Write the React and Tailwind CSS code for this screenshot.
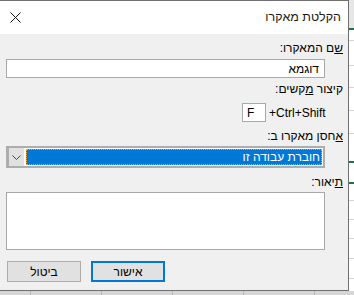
import React from 'react';

const font = { fontFamily: '"Liberation Sans", Arial, sans-serif' };

const Label = ({ children, className = '' }) => (
    <div className={`pr-[5px] text-[12px] leading-[14px] text-black ${className}`}>{children}</div>
);

const RightStrip = () => {
    const rows = [
        { h: 'h-[28px]', c: 'bg-[#e6e6e6]' },
        { h: 'h-[2px]', c: 'bg-[#217346]' },
        { h: 'h-[10px]', c: 'bg-white' },
        { h: 'h-[1px]', c: 'bg-[#d4d4d4]' },
        { h: 'h-[24px]', c: 'bg-white' },
        { h: 'h-[1px]', c: 'bg-[#d4d4d4]' },
        { h: 'h-[21px]', c: 'bg-white' },
        { h: 'h-[1px]', c: 'bg-[#d4d4d4]' },
        { h: 'h-[22px]', c: 'bg-white' },
        { h: 'h-[1px]', c: 'bg-[#d4d4d4]' },
        { h: 'h-[22px]', c: 'bg-white' },
        { h: 'h-[1px]', c: 'bg-[#d4d4d4]' },
        { h: 'h-[27px]', c: 'bg-white' },
        { h: 'h-[2px]', c: 'bg-[#217346]' },
        { h: 'h-[19px]', c: 'bg-white' },
        { h: 'h-[2px]', c: 'bg-[#217346]' },
        { h: 'h-[16px]', c: 'bg-white' },
        { h: 'h-[1px]', c: 'bg-[#d4d4d4]' },
        { h: 'h-[18px]', c: 'bg-white' },
        { h: 'h-[1px]', c: 'bg-[#d4d4d4]' },
        { h: 'h-[18px]', c: 'bg-white' },
        { h: 'h-[1px]', c: 'bg-[#d4d4d4]' },
        { h: 'h-[19px]', c: 'bg-white' },
        { h: 'h-[1px]', c: 'bg-[#d4d4d4]' },
        { h: 'h-[19px]', c: 'bg-white' },
        { h: 'h-[1px]', c: 'bg-[#d4d4d4]' },
        { h: 'flex-1', c: 'bg-white' },
    ];
    return (
        <div className="w-[5px] flex flex-col">
            {rows.map((r, i) => (
                <div key={i} className={`${r.h} ${r.c} shrink-0`} />
            ))}
        </div>
    );
};

const BottomStrip = () => {
    const widths = ['w-[31px]', 'w-[71px]', 'w-[71px]', 'w-[71px]', 'w-[71px]'];
    return (
        <div className="h-[4px] flex bg-[#d6d6d6]">
            {widths.map((w, i) => (
                <div key={i} className={`${w} shrink-0 border-r border-[#b4b4b4]`} />
            ))}
        </div>
    );
};

export default function App() {
    return (
        <div className="w-[354px] h-[295px] overflow-hidden flex flex-col bg-white" style={font}>
            <div className="flex h-[291px]">
                {/* Dialog */}
                <div dir="rtl" className="w-[349px] h-[291px] flex flex-col border-t border-r border-b border-[#6f6f6f] bg-[#f0f0f0]">
                    {/* Title bar */}
                    <div className="h-[33px] bg-white flex items-center justify-between pr-[7px] pl-[10px] shrink-0">
                        <span className="text-[12.5px] text-[#1a1a1a]">הקלטת מאקרו</span>
                        <svg width="11" height="11" viewBox="0 0 11 11">
                            <path d="M0.5 0.5 L10.5 10.5 M10.5 0.5 L0.5 10.5" stroke="#111" strokeWidth="1" />
                        </svg>
                    </div>

                    <Label className="mt-[7px]"><u>ש</u>ם המאקרו:</Label>
                    <div className="mt-[4px] mr-[23px] ml-[6px] h-[19px] bg-white border border-[#a9a9a9] flex items-center pr-[5px] text-[12px]">
                        דוגמא
                    </div>

                    <Label className="mt-[4px]">קיצור <u>מ</u>קשים:</Label>
                    <div dir="ltr" className="mt-[7px] flex items-center pl-[242px] h-[19px]">
                        <div className="w-[24px] h-[19px] bg-white border border-[#a9a9a9] flex items-center pl-[4px] text-[12px]">F</div>
                        <span className="ml-[3px] text-[12px]">+Ctrl+Shift</span>
                    </div>

                    <Label className="mt-[7px]"><u>א</u>חסן מאקרו ב:</Label>
                    <div className="mt-[3px] mr-[23px] ml-[6px] h-[22px] bg-white border-2 border-[#adadad] flex flex-row-reverse">
                        <div className="w-[16px] h-full bg-[#e1e1e1] border-l border-[#adadad] flex items-center justify-center shrink-0">
                            <svg width="9" height="5" viewBox="0 0 9 5">
                                <path d="M0.5 0.5 L4.5 4.5 L8.5 0.5" stroke="#444" strokeWidth="1" fill="none" />
                            </svg>
                        </div>
                        <div className="flex-1 py-[1px] pl-[2px] pr-[1px]">
                            <div className="h-full bg-[#0078d7] outline outline-dotted outline-1 outline-[#f0a23a] -outline-offset-1 flex items-center pr-[2px] text-[12px] text-white">
                                חוברת עבודה זו
                            </div>
                        </div>
                    </div>

                    <Label className="mt-[7px]"><u>ת</u>יאור:</Label>
                    <div className="mt-[3px] mr-[23px] ml-[6px] h-[58px] bg-white border border-[#a9a9a9]" />

                    <div dir="ltr" className="mt-[11px] flex gap-[10px] pl-[7px]">
                        <div className="w-[74px] h-[21px] bg-[#e1e1e1] border border-[#adadad] flex items-center justify-center text-[12px]">ביטול</div>
                        <div className="w-[74px] h-[21px] bg-[#e1e1e1] border-2 border-[#0078d7] flex items-center justify-center text-[12px]">אישור</div>
                    </div>
                </div>
                <RightStrip />
            </div>
            <BottomStrip />
        </div>
    );
}
